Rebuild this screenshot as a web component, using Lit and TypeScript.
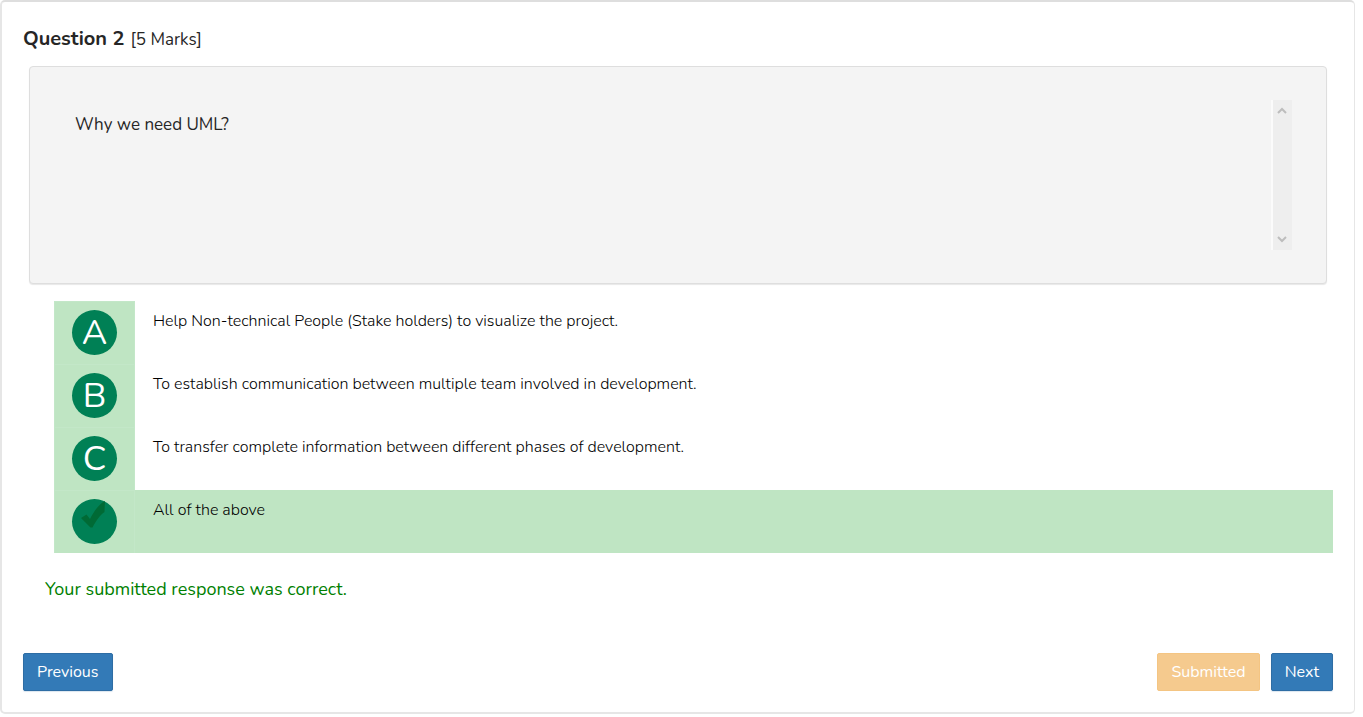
import { LitElement, html, css, svg } from "lit";
import { customElement, state } from "lit/decorators.js";
import { classMap } from "lit/directives/class-map.js";

interface Option {
  letter: string;
  text: string;
}

const OPTIONS: Option[] = [
  { letter: "A", text: "Help Non-technical People (Stake holders) to visualize the project." },
  { letter: "B", text: "To establish communication between multiple team involved in development." },
  { letter: "C", text: "To transfer complete information between different phases of development." },
  { letter: "D", text: "All of the above" },
];

@customElement("app-root")
export class AppRoot extends LitElement {
  static styles = css`
    :host {
      display: block;
      padding-right: 8px;
      font-family: Nunito, "Open Sans", "Noto Sans", sans-serif;
      font-size: 16px;
      line-height: 22px;
      color: #262626;
    }
    * {
      box-sizing: border-box;
    }
    .card {
      border: 2px solid #e6e6e6;
      border-top-color: #dedede;
      border-right-width: 1px;
      border-radius: 5px;
      padding: 23px 21px 21px;
      background: #fff;
    }
    .title {
      display: flex;
      align-items: baseline;
      gap: 6px;
      margin: 0 0 12px;
      font-size: 20px;
      line-height: 28px;
      font-weight: 700;
    }
    .marks {
      font-size: 17px;
      font-weight: 400;
    }
    .well {
      display: flex;
      justify-content: space-between;
      margin: 0 6px;
      padding: 33px 34px 33px 45px;
      border: 1px solid #dedede;
      border-radius: 4px;
      background: #f4f4f4;
      box-shadow: 0 1px 1px #e8e8e8;
    }
    .prompt {
      margin: 13px 0 0;
      font-size: 17px;
      line-height: 24px;
    }
    .scroll {
      display: flex;
      flex-direction: column;
      justify-content: space-between;
      align-items: center;
      width: 21px;
      height: 150px;
      padding: 6px 0;
      border-left: 2px solid #fbfbfb;
      background: #eee;
    }
    .arrow {
      display: block;
      width: 12px;
      height: 10px;
      fill: none;
      stroke: #bdbdbd;
      stroke-width: 2;
    }
    .options {
      margin: 17px 0 0 31px;
      padding: 0;
      border: 0;
      min-width: 0;
    }
    .option {
      display: grid;
      grid-template-columns: 81px 1fr;
      min-height: 63px;
    }
    .badge {
      display: grid;
      justify-items: center;
      align-items: start;
      padding-top: 8px;
      border: 1px solid #c3e7c8;
      border-bottom-width: 0;
      background: #bfe5c3;
    }
    .radio,
    .letter,
    .tick {
      grid-area: 1 / 1;
    }
    .radio {
      appearance: none;
      width: 45px;
      height: 45px;
      margin: 0;
      border-radius: 50%;
      background: #008055;
    }
    .letter {
      color: #fff;
      font-size: 35px;
      line-height: 46px;
    }
    .tick {
      width: 45px;
      height: 45px;
      fill: #006a35;
    }
    .text {
      padding: 9px 18px;
      color: #000;
      font-weight: 300;
    }
    .chosen .text {
      background: #bfe5c3;
    }
    .feedback {
      margin: 24px 0 0 22px;
      color: #008000;
      font-size: 18px;
      line-height: 24px;
    }
    .actions {
      display: flex;
      gap: 11px;
      margin-top: 52px;
    }
    .btn {
      height: 38px;
      padding: 0 13px;
      border: 1px solid #2e6da4;
      border-radius: 2px;
      background: #337ab7;
      box-shadow: 0 1px 1px #dce6ef;
      color: #fff;
      font: inherit;
    }
    .previous {
      margin-right: auto;
    }
    .submitted {
      border-color: #f4c583;
      background: #f5ca8e;
      box-shadow: none;
    }
  `;

  @state() private chosen = "D";

  private renderMark(letter: string) {
    return letter === this.chosen
      ? html`<svg class="tick" viewBox="0 0 45 45" aria-hidden="true">
          ${svg`<path d="M9 19L14.5 15.5L18 20C22 12 27 5 33 2L32.5 13C28 16 24 22 20.5 28.5L18.5 28.5Z" />`}
        </svg>`
      : html`<span class="letter">${letter}</span>`;
  }

  render() {
    return html`
      <main class="card">
        <h1 class="title">Question 2 <span class="marks">[5 Marks]</span></h1>
        <section class="well">
          <p class="prompt" id="prompt">Why we need UML?</p>
          <div class="scroll" aria-hidden="true">
            <svg class="arrow" viewBox="0 0 12 10"><path d="M1 7L5 3L9 7" /></svg>
            <svg class="arrow" viewBox="0 0 12 10"><path d="M1 3L5 7L9 3" /></svg>
          </div>
        </section>
        <fieldset class="options" aria-labelledby="prompt">
          ${OPTIONS.map(
            (o) => html`
              <label class=${classMap({ option: true, chosen: o.letter === this.chosen })}>
                <span class="badge">
                  <input
                    class="radio"
                    type="radio"
                    name="answer"
                    .checked=${o.letter === this.chosen}
                    @change=${() => (this.chosen = o.letter)}
                  />
                  ${this.renderMark(o.letter)}
                </span>
                <span class="text">${o.text}</span>
              </label>
            `
          )}
        </fieldset>
        <p class="feedback">Your submitted response was correct.</p>
        <div class="actions">
          <button class="btn previous" type="button">Previous</button>
          <button class="btn submitted" type="button" disabled>Submitted</button>
          <button class="btn" type="button">Next</button>
        </div>
      </main>
    `;
  }
}
